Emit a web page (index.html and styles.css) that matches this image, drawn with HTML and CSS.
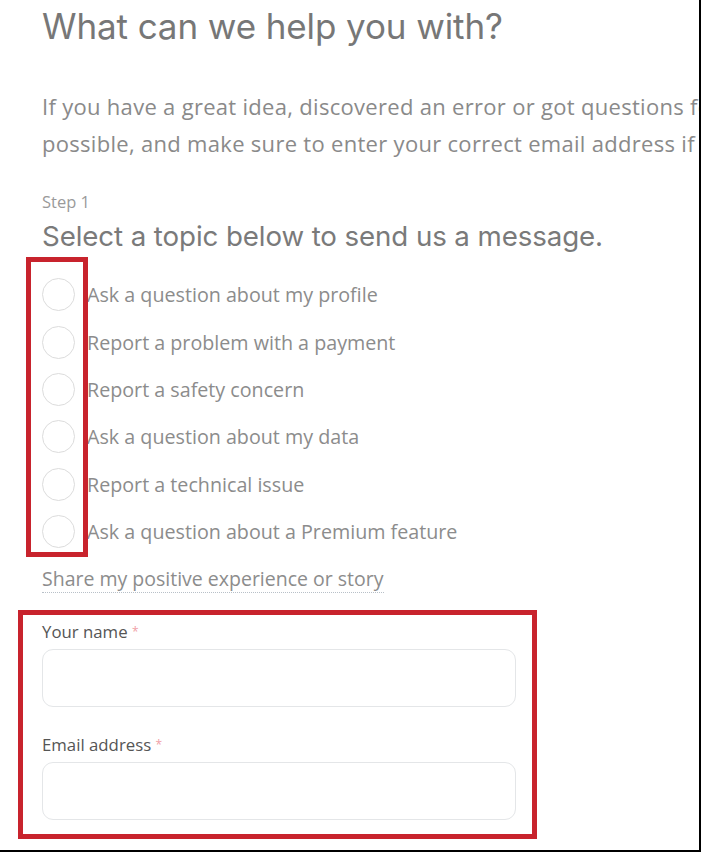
FILE: index.html
```html
<!DOCTYPE html>
<html lang="en">
<head>
<meta charset="utf-8">
<title>What can we help you with?</title>
<link rel="stylesheet" href="styles.css">
</head>
<body>
<div class="page">
  <h1 class="title">What can we help you with?</h1>
  <div class="intro">
    <p class="intro-line">If you have a great idea, discovered an error or got questions for us, please let us know as soon as</p>
    <p class="intro-line">possible, and make sure to enter your correct email address if you would like us to reply.</p>
  </div>
  <div class="step">Step 1</div>
  <h2 class="subtitle">Select a topic below to send us a message.</h2>
  <ul class="topics">
    <li class="topic"><span class="radio"></span><span class="topic-label">Ask a question about my profile</span></li>
    <li class="topic"><span class="radio"></span><span class="topic-label">Report a problem with a payment</span></li>
    <li class="topic"><span class="radio"></span><span class="topic-label">Report a safety concern</span></li>
    <li class="topic"><span class="radio"></span><span class="topic-label">Ask a question about my data</span></li>
    <li class="topic"><span class="radio"></span><span class="topic-label">Report a technical issue</span></li>
    <li class="topic"><span class="radio"></span><span class="topic-label">Ask a question about a Premium feature</span></li>
    <li class="highlight-radios"></li>
  </ul>
  <a class="share" href="#">Share my positive experience or story</a>
  <form class="form highlight-box">
    <label class="field">
      <span class="field-label">Your name <span class="req">*</span></span>
      <input class="input" type="text">
    </label>
    <label class="field">
      <span class="field-label">Email address <span class="req">*</span></span>
      <input class="input" type="email">
    </label>
  </form>
</div>
</body>
</html>
```

FILE: styles.css
```css
* { box-sizing: border-box; }
html, body { margin: 0; padding: 0; background: #fff; }
body { overflow: hidden; }

.page {
  width: 701px;
  height: 852px;
  border-right: 2px solid #000;
  border-bottom: 2px solid #000;
  padding-left: 42px;
  overflow: hidden;
  font-family: "Open Sans", "Noto Sans", sans-serif;
}

.title {
  margin: 0;
  padding-top: 5px;
  font-family: Inter, "Noto Sans", sans-serif;
  font-weight: 400;
  font-size: 35px;
  line-height: 42px;
  letter-spacing: -0.1px;
  color: #777;
  white-space: nowrap;
}

.intro { margin-top: 41px; }
.intro-line {
  margin: 0;
  white-space: nowrap;
  font-size: 22px;
  line-height: 37px;
  letter-spacing: 0.3px;
  color: #8a8a8a;
}

.step {
  margin-top: 30px;
  font-size: 16.5px;
  line-height: 20px;
  color: #9a9a9a;
}

.subtitle {
  margin: 8px 0 0;
  font-family: Inter, "Noto Sans", sans-serif;
  font-weight: 400;
  font-size: 27.7px;
  line-height: 32px;
  letter-spacing: -0.1px;
  color: #7a7a7a;
  white-space: nowrap;
}

.topics {
  position: relative;
  list-style: none;
  margin: 19px 0 0;
  padding: 0;
}
.topic {
  display: flex;
  align-items: center;
  gap: 12px;
  height: 47.4px;
}
.radio {
  flex: none;
  width: 33px;
  height: 33px;
  border-radius: 50%;
  border: 1.5px solid #dcdcdc;
  background: #fff;
}
.topic-label {
  font-size: 19.7px;
  letter-spacing: 0;
  color: #8c8c8c;
  white-space: nowrap;
}

.highlight-radios {
  position: absolute;
  left: -16px;
  top: -14px;
  width: 62px;
  height: 300px;
  border: 5px solid #c8232d;
  pointer-events: none;
}

.share {
  display: block;
  width: fit-content;
  margin-top: 11px;
  font-size: 19.5px;
  line-height: 26px;
  color: #8c8c8c;
  text-decoration: none;
  border-bottom: 1.5px dotted #b8c0c8;
}

.highlight-box {
  border: 5px solid #c8232d;
}
.form {
  margin: 17px 0 0 -24px;
  width: 519px;
  padding: 5.5px 16px 14px 19px;
  display: flex;
  flex-direction: column;
  gap: 26.5px;
}
.field {
  display: flex;
  flex-direction: column;
  gap: 6.5px;
}
.field-label {
  font-size: 16.8px;
  line-height: 22px;
  color: #555;
}
.req { color: #f0a0a6; font-size: 12px; vertical-align: top; }
.input {
  width: 100%;
  height: 58px;
  border: 1.5px solid #e4e6e8;
  border-radius: 11px;
  background: #fff;
  font: inherit;
  outline: none;
}
```
